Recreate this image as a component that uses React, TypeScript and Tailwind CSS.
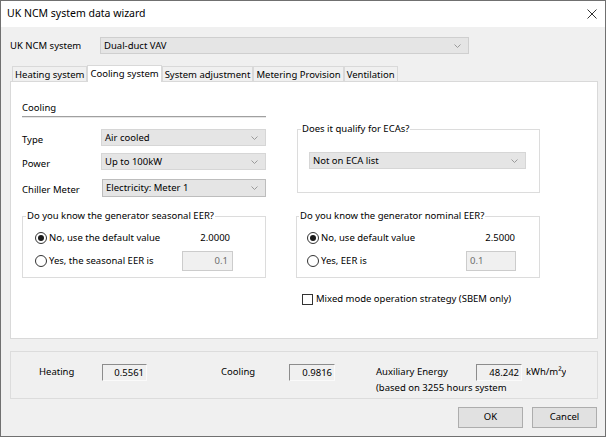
import React from 'react';

const font = { fontFamily: '"Noto Sans", "Open Sans", sans-serif' };

const Chevron = () => (
  <svg width="7" height="4" viewBox="0 0 7 4" className="shrink-0">
    <polyline points="0.5,0.5 3.5,3.5 6.5,0.5" fill="none" stroke="#9a9a9a" strokeWidth="1" />
  </svg>
);

interface SelectProps {
  value: string;
  className?: string;
  border?: string;
}

const Select: React.FC<SelectProps> = ({ value, className = '', border = 'border-[#d6d6d6]' }) => (
  <div className={`flex items-center justify-between h-[17px] bg-[#e5e5e5] border ${border} pl-[3px] pr-[7px] ${className}`}>
    <span className="leading-none">{value}</span>
    <Chevron />
  </div>
);

const Radio: React.FC<{ checked?: boolean }> = ({ checked }) => (
  <span className="w-[12px] h-[12px] rounded-full border border-[#333333] bg-white flex items-center justify-center shrink-0">
    {checked && <span className="w-[6px] h-[6px] rounded-full bg-[#1a1a1a]"></span>}
  </span>
);

const Readout: React.FC<{ value: string; className?: string }> = ({ value, className = '' }) => (
  <div className={`h-[17px] border-t border-l border-[#8c8c8c] border-r border-b border-r-[#fafafa] border-b-[#fafafa] text-right pr-[2px] leading-[15px] ${className}`}>
    {value}
  </div>
);

const Tab: React.FC<{ label: string; active?: boolean }> = ({ label, active }) => (
  <div
    className={`border border-[#d9d9d9] border-b-0 px-[2px] ${
      active ? 'bg-white h-[17px] leading-[15px] -mb-[1px] relative z-10' : 'bg-[#f0f0f0] h-[15px] leading-[15px] mt-[2px]'
    }`}
  >
    {label}
  </div>
);

const Field: React.FC<{ label: string; children: React.ReactNode; className?: string }> = ({ label, children, className = '' }) => (
  <div className={`flex ${className}`}>
    <span className="w-[79px] shrink-0 leading-[17px] translate-y-[1.5px]">{label}</span>
    {children}
  </div>
);

export default function App() {
  return (
    <div className="w-[606px] h-[437px] border border-[#707070] bg-[#f0f0f0] text-[9.5px] text-black flex flex-col overflow-hidden" style={font}>
      {/* Title bar */}
      <div className="h-[26px] bg-white flex items-center justify-between pl-[6px] pr-[8px] shrink-0">
        <span className="text-[10.5px]">UK NCM system data wizard</span>
        <svg width="10" height="10" viewBox="0 0 10 10">
          <path d="M0.5 0.5 L9.5 9.5 M9.5 0.5 L0.5 9.5" stroke="#333333" strokeWidth="1" />
        </svg>
      </div>

      <div className="flex flex-col pl-[9px] pr-[7px]">
        {/* System selector */}
        <div className="flex items-center mt-[10px] h-[17px]">
          <span className="w-[90px] pt-[2px]">UK NCM system</span>
          <Select value="Dual-duct VAV" className="w-[369px]" border="border-[#cfcfcf]" />
        </div>

        {/* Tabs */}
        <div className="flex items-end mt-[10px] pl-[2px] h-[17px]">
          <Tab label="Heating system" />
          <Tab label="Cooling system" active />
          <Tab label="System adjustment" />
          <Tab label="Metering Provision" />
          <Tab label="Ventilation" />
        </div>

        {/* Tab panel */}
        <div className="h-[258px] bg-white border border-[#d9d9d9] pt-[18px] pl-[11px]">
          <div className="grid grid-cols-[244px_244px] gap-x-[30px]">
            {/* Left top */}
            <div className="flex flex-col">
              <div className="h-[16px] leading-[16px]">Cooling</div>
              <div className="h-[2px] border-t border-[#a0a0a0] border-b border-b-[#e6e6e6]"></div>
              <Field label="Type" className="mt-[11px] h-[17px]">
                <Select value="Air cooled" className="w-[165px]" />
              </Field>
              <Field label="Power" className="mt-[7px] h-[17px]">
                <Select value="Up to 100kW" className="w-[165px]" />
              </Field>
              <Field label="Chiller Meter" className="mt-[9px] h-[18px]">
                <Select value="Electricity: Meter 1" className="w-[165px] h-[18px] ml-[1px]" border="border-[#bdbdbd]" />
              </Field>
            </div>

            {/* Right top */}
            <div className="pt-[21px]">
              <fieldset className="border border-[#dcdcdc] ml-[1px] w-[243px]">
                <legend className="ml-[3px] px-[1px] leading-[16px]">Does it qualify for ECAs?</legend>
                <div className="pl-[11px] pr-[13px] pt-[15px] pb-[23px]">
                  <Select value="Not on ECA list" className="w-[217px]" />
                </div>
              </fieldset>
            </div>

            {/* Left groupbox */}
            <fieldset className="border border-[#dcdcdc] mt-[11px] w-[244px]">
              <legend className="ml-[3px] px-[1px] leading-[16px]">Do you know the generator seasonal EER?</legend>
              <div className="pl-[12px] pr-[32px] pt-[4px] pb-[6px] flex flex-col gap-[3px]">
                <div className="flex items-center justify-between h-[20px]">
                  <div className="flex items-center gap-[2px]">
                    <Radio checked />
                    <span>No, use the default value</span>
                  </div>
                  <span className="w-[51px] text-right pr-[3px]">2.0000</span>
                </div>
                <div className="flex items-center justify-between h-[20px]">
                  <div className="flex items-center gap-[2px]">
                    <Radio />
                    <span>Yes, the seasonal EER is</span>
                  </div>
                  <div className="w-[51px] h-[20px] bg-[#f0f0f0] border border-[#cccccc] text-right pr-[4px] leading-[18px] text-[#6d6d6d]">0.1</div>
                </div>
              </div>
            </fieldset>

            {/* Right groupbox */}
            <fieldset className="border border-[#dcdcdc] mt-[11px] w-[244px]">
              <legend className="ml-[2px] px-[1px] leading-[16px]">Do you know the generator nominal EER?</legend>
              <div className="pl-[10px] pr-[23px] pt-[4px] pb-[5px] flex flex-col gap-[3px]">
                <div className="flex items-center justify-between h-[20px]">
                  <div className="flex items-center gap-[2px]">
                    <Radio checked />
                    <span>No, use default value</span>
                  </div>
                  <span className="w-[50px] text-right pr-[1px]">2.5000</span>
                </div>
                <div className="flex items-center justify-between h-[20px]">
                  <div className="flex items-center gap-[2px]">
                    <Radio />
                    <span>Yes, EER is</span>
                  </div>
                  <div className="w-[50px] h-[20px] bg-[#f0f0f0] border border-[#cccccc] pl-[3px] leading-[18px] text-[#6d6d6d]">0.1</div>
                </div>
              </div>
            </fieldset>

            <div></div>
            <div className="flex items-center gap-[3px] mt-[13px] pl-[6px] h-[16px]">
              <span className="w-[11px] h-[11px] border border-[#333333] bg-white shrink-0"></span>
              <span>Mixed mode operation strategy (SBEM only)</span>
            </div>
          </div>
        </div>

        {/* Results panel */}
        <div className="h-[48px] mt-[12px] border border-[#dcdcdc] pt-[12px] pl-[28px] flex items-start">
          <span className="w-[63px] leading-[16px]">Heating</span>
          <Readout value="0.5561" className="w-[45px]" />
          <span className="ml-[74px] w-[68px] leading-[16px]">Cooling</span>
          <Readout value="0.9816" className="w-[46px]" />
          <div className="ml-[41px] flex flex-col">
            <div className="flex items-start">
              <span className="w-[100px] leading-[16px]">Auxiliary Energy</span>
              <Readout value="48.242" className="w-[46px]" />
              <span className="ml-[4px] w-[40px] overflow-hidden whitespace-nowrap leading-[16px]">kWh/m²y</span>
            </div>
            <span className="leading-[16px] -mt-[1px]">(based on 3255 hours system</span>
          </div>
        </div>

        {/* Buttons */}
        <div className="flex justify-end gap-[9px] mt-[8px] pr-[1px]">
          <button className="w-[65px] h-[21px] bg-[#e1e1e1] border border-[#adadad]">OK</button>
          <button className="w-[65px] h-[21px] bg-[#e1e1e1] border border-[#adadad]">Cancel</button>
        </div>
      </div>
    </div>
  );
}
